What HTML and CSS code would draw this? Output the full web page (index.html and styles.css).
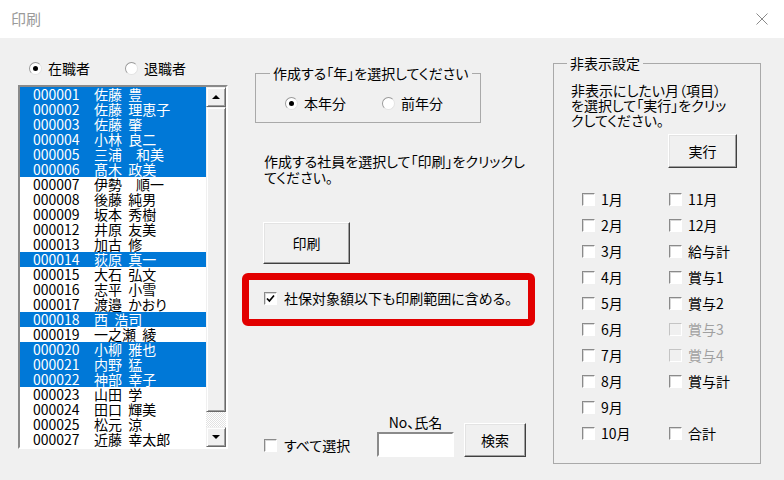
FILE: index.html
```html
<!DOCTYPE html>
<html lang="ja">
<head>
    <meta charset="UTF-8">
    <title>印刷</title>
    <link rel="stylesheet" href="styles.css">
</head>
<body>
<div class="window">
    <div class="titlebar">
        <span class="title">印刷</span>
        <svg class="close" width="12" height="12" viewBox="0 0 12 12"><path d="M0.5 0.5L11.5 11.5M11.5 0.5L0.5 11.5" stroke="#8a8a8a" stroke-width="1" fill="none"/></svg>
    </div>

    <div class="dialog">
        <!-- 社員リスト -->
        <div class="left">
            <div class="radio-row">
                <label class="radio-item item-wide"><span class="radio checked"></span>在職者</label>
                <label class="radio-item"><span class="radio"></span>退職者</label>
            </div>
            <div class="listbox">
                <ul class="list">
                    <li class="sel"><span class="code">000001</span>佐藤 豊</li>
                    <li class="sel"><span class="code">000002</span>佐藤 理恵子</li>
                    <li class="sel"><span class="code">000003</span>佐藤 肇</li>
                    <li class="sel"><span class="code">000004</span>小林 良二</li>
                    <li class="sel"><span class="code">000005</span>三浦　和美</li>
                    <li class="sel"><span class="code">000006</span>髙木 政美</li>
                    <li><span class="code">000007</span>伊勢　順一</li>
                    <li><span class="code">000008</span>後藤 純男</li>
                    <li><span class="code">000009</span>坂本 秀樹</li>
                    <li><span class="code">000012</span>井原 友美</li>
                    <li><span class="code">000013</span>加古 修</li>
                    <li class="sel"><span class="code">000014</span>荻原 真一</li>
                    <li><span class="code">000015</span>大石 弘文</li>
                    <li><span class="code">000016</span>志平 小雪</li>
                    <li><span class="code">000017</span>渡邉 かおり</li>
                    <li class="sel"><span class="code">000018</span>西 浩司</li>
                    <li><span class="code">000019</span>一之瀬 綾</li>
                    <li class="sel"><span class="code">000020</span>小柳 雅也</li>
                    <li class="sel"><span class="code">000021</span>内野 猛</li>
                    <li class="sel"><span class="code">000022</span>神部 幸子</li>
                    <li><span class="code">000023</span>山田 学</li>
                    <li><span class="code">000024</span>田口 輝美</li>
                    <li><span class="code">000025</span>松元 涼</li>
                    <li><span class="code">000027</span>近藤 幸太郎</li>
                </ul>
                <div class="scrollbar">
                    <div class="sb-btn"><span class="arrow-up"></span></div>
                    <div class="sb-thumb"></div>
                    <div class="sb-track"></div>
                    <div class="sb-btn"><span class="arrow-down"></span></div>
                </div>
            </div>
        </div>

        <!-- 年・印刷 -->
        <div class="middle">
            <fieldset class="year-group">
                <legend>作成する「年」を選択してください</legend>
                <div class="year-radios">
                    <label class="radio-item year-item"><span class="radio checked"></span>本年分</label>
                    <label class="radio-item"><span class="radio"></span>前年分</label>
                </div>
            </fieldset>

            <p class="note">作成する社員を選択して「印刷」をクリックし<br>てください。</p>

            <button class="btn btn-print">印刷</button>

            <div class="highlight-box">
                <label class="check-item"><span class="check"><svg width="9" height="9" viewBox="0 0 9 9"><path d="M1 4.5L3.4 7L8 1.5" stroke="#000" stroke-width="1.7" fill="none"/></svg></span>社保対象額以下も印刷範囲に含める。</label>
            </div>

            <div class="search-row">
                <label class="check-item select-all"><span class="check"></span>すべて選択</label>
                <div class="search-field">
                    <span class="search-label">No、氏名</span>
                    <input class="search-input" type="text">
                </div>
                <button class="btn btn-search">検索</button>
            </div>
        </div>

        <!-- 非表示設定 -->
        <fieldset class="hide-group">
            <legend>非表示設定</legend>
            <p class="hide-note">非表示にしたい月（項目）<br>を選択して「実行」をクリッ<br>クしてください。</p>
            <button class="btn btn-run">実行</button>
            <div class="month-grid">
                <label class="check-item"><span class="check"></span>1月</label>
                <label class="check-item"><span class="check"></span>11月</label>
                <label class="check-item"><span class="check"></span>2月</label>
                <label class="check-item"><span class="check"></span>12月</label>
                <label class="check-item"><span class="check"></span>3月</label>
                <label class="check-item"><span class="check"></span>給与計</label>
                <label class="check-item"><span class="check"></span>4月</label>
                <label class="check-item"><span class="check"></span>賞与1</label>
                <label class="check-item"><span class="check"></span>5月</label>
                <label class="check-item"><span class="check"></span>賞与2</label>
                <label class="check-item"><span class="check"></span>6月</label>
                <label class="check-item disabled"><span class="check"></span>賞与3</label>
                <label class="check-item"><span class="check"></span>7月</label>
                <label class="check-item disabled"><span class="check"></span>賞与4</label>
                <label class="check-item"><span class="check"></span>8月</label>
                <label class="check-item"><span class="check"></span>賞与計</label>
                <label class="check-item"><span class="check"></span>9月</label>
                <span></span>
                <label class="check-item"><span class="check"></span>10月</label>
                <label class="check-item"><span class="check"></span>合計</label>
            </div>
        </fieldset>
    </div>
</div>
</body>
</html>
```

FILE: styles.css
```css
* {
    box-sizing: border-box;
}

body {
    margin: 0;
    width: 784px;
    height: 480px;
    overflow: hidden;
    background-color: #f0f0f0;
    font-family: "Noto Sans CJK JP", sans-serif;
    font-size: 14px;
    font-feature-settings: "palt";
    color: #000;
}

.titlebar {
    height: 38px;
    background-color: #fff;
    display: flex;
    align-items: center;
    justify-content: space-between;
    padding: 0 16px 0 11px;
}

.title {
    color: #9a9a9a;
    font-size: 15px;
    line-height: 16px;
}

.close {
    display: block;
}

.dialog {
    display: flex;
    align-items: flex-start;
    height: 442px;
    padding-left: 18px;
}

/* radio / check */
.radio-item {
    display: flex;
    align-items: center;
    gap: 6px;
    line-height: 16px;
}

.radio {
    width: 13px;
    height: 13px;
    border-radius: 50%;
    background-color: #fff;
    border: 1px solid;
    border-color: #9a9a9a #e3e3e3 #e3e3e3 #9a9a9a;
    display: flex;
    align-items: center;
    justify-content: center;
}

.radio.checked::after {
    content: "";
    width: 5px;
    height: 5px;
    border-radius: 50%;
    background-color: #000;
}

.check-item {
    display: flex;
    align-items: center;
    gap: 7px;
    line-height: 16px;
    white-space: nowrap;
}

.check {
    width: 13px;
    height: 13px;
    flex: none;
    background-color: #fff;
    border: 1px solid;
    border-color: #8a8a8a #fff #fff #8a8a8a;
    box-shadow: inset 1px 1px #d8d8d8;
    display: flex;
    align-items: center;
    justify-content: center;
}

.check svg {
    display: block;
}

.check-item.disabled {
    color: #a0a0a0;
}

.check-item.disabled .check {
    background-color: #f0f0f0;
    border-color: #c4c4c4 #fff #fff #c4c4c4;
    box-shadow: none;
}

.btn {
    font: inherit;
    font-feature-settings: inherit;
    color: #000;
    background-color: #f0f0f0;
    border: 1px solid;
    border-color: #fff #404040 #404040 #fff;
    box-shadow: inset -1px -1px #a0a0a0, inset 1px 1px #e3e3e3;
    padding: 0;
    display: block;
}

fieldset {
    margin: 0;
    min-width: 0;
    border: 1px solid #a9a9a9;
}

legend {
    padding: 0 3px;
    line-height: 16px;
}

/* left column */
.left {
    width: 210px;
    margin-top: 22px;
}

.radio-row {
    display: flex;
    align-items: center;
    height: 16px;
    padding-left: 11px;
}

.item-wide {
    width: 96px;
}

.listbox {
    margin-top: 9px;
    width: 210px;
    height: 364px;
    display: flex;
    background-color: #fff;
    border: 2px solid;
    border-color: #8a8a8a #fff #fff #8a8a8a;
}

.list {
    list-style: none;
    margin: 0;
    padding: 0;
    flex: 1;
    overflow: hidden;
}

.list li {
    height: 15px;
    line-height: 15px;
    padding-left: 13px;
    white-space: nowrap;
    word-spacing: 3px;
}

.list li.sel {
    background-color: #0078d7;
    color: #fff;
}

.code {
    display: inline-block;
    width: 61px;
}

.scrollbar {
    width: 20px;
    display: flex;
    flex-direction: column;
}

.sb-btn,
.sb-thumb {
    background-color: #f0f0f0;
    border: 1px solid;
    border-color: #f0f0f0 #696969 #696969 #f0f0f0;
    box-shadow: inset 1px 1px #fff, inset -1px -1px #a0a0a0;
}

.sb-btn {
    height: 20px;
    display: flex;
    align-items: center;
    justify-content: center;
}

.sb-thumb {
    height: 305px;
}

.sb-track {
    flex: 1;
    background: repeating-conic-gradient(#fff 0 25%, #e2e2e2 0 50%) 0 0 / 2px 2px;
}

.arrow-up {
    border-left: 4px solid transparent;
    border-right: 4px solid transparent;
    border-bottom: 4px solid #000;
}

.arrow-down {
    border-left: 4px solid transparent;
    border-right: 4px solid transparent;
    border-top: 4px solid #000;
}

/* middle column */
.middle {
    width: 293px;
    margin-left: 14px;
    display: flex;
    flex-direction: column;
    align-items: flex-start;
}

.year-group {
    width: 226px;
    margin: 27px 0 0 13px;
    padding: 0 0 11px 14px;
}

.year-radios {
    display: flex;
    align-items: center;
    height: 16px;
    margin-top: 14px;
    padding-left: 15px;
}

.year-item {
    width: 97px;
}

.note {
    margin: 30px 0 0 22px;
    line-height: 16px;
}

.btn-print {
    width: 87px;
    height: 42px;
    margin: 37px 0 0 21px;
}

.highlight-box {
    margin-top: 9px;
    width: 293px;
    height: 53px;
    border: 7px solid #e20000;
    border-radius: 6px;
    display: flex;
    align-items: center;
    padding: 0 0 3px 15px;
}

.search-row {
    display: flex;
    align-items: flex-end;
    margin-top: 88px;
    padding-left: 22px;
}

.select-all {
    width: 113px;
    margin-bottom: 4px;
}

.search-field {
    width: 77px;
    display: flex;
    flex-direction: column;
    align-items: center;
    gap: 2px;
}

.search-label {
    line-height: 16px;
}

.search-input {
    width: 77px;
    height: 25px;
    padding: 0;
    font: inherit;
    background-color: #fff;
    border: 2px solid;
    border-color: #8a8a8a #fff #fff #8a8a8a;
    outline: none;
}

.btn-search {
    width: 62px;
    height: 34px;
    margin-left: 10px;
}

/* right group */
.hide-group {
    width: 208px;
    height: 409px;
    margin: 17px 0 0 18px;
    padding: 0 0 0 13px;
}

.hide-note {
    margin: 12px 0 0 4px;
    line-height: 15px;
}

.btn-run {
    width: 69px;
    height: 34px;
    margin: 6px 0 0 101px;
}

.month-grid {
    display: grid;
    grid-template-columns: 87px 87px;
    grid-auto-rows: 26px;
    align-items: center;
    margin: 18px 0 0 15px;
}

.month-grid .check-item {
    gap: 6px;
}
```
